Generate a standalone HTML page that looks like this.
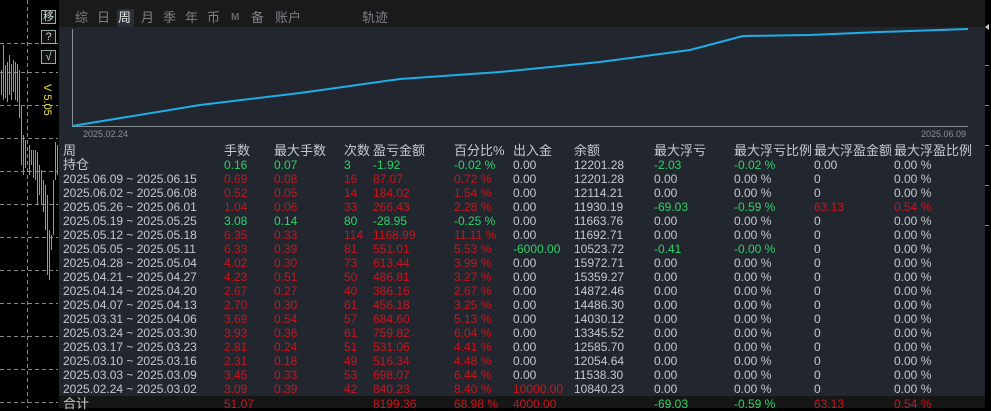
<!DOCTYPE html>
<html><head><meta charset="utf-8"><style>
*{margin:0;padding:0;box-sizing:border-box}
body{width:991px;height:408px;overflow:hidden;background:#000;font-family:"Liberation Sans","Noto Sans CJK SC",sans-serif;position:relative}
.panel{position:absolute;left:59px;top:0;width:926px;height:408px;background:#22262e}
.top{position:absolute;left:59px;top:0;width:926px;height:27px;background:#1a1a1a}
.tab{position:absolute;top:9px;font-size:13px;color:#7c8088;line-height:17px}
.row{position:absolute;left:0;width:991px;height:14px;font-size:12px;line-height:14px;color:#c5c9cf}
.row span{position:absolute;white-space:nowrap}
.r{color:#c8161c}.g{color:#2fd368}
.c0{left:63px}.c1{left:224px}.c2{left:274px}.c3{left:344px}.c4{left:373px}.c5{left:454px}.c6{left:513px}.c7{left:574px}.c8{left:654px}.c9{left:734px}.c10{left:814px}.c11{left:894px}
.hd{font-size:13px}
.btn{position:absolute;left:41px;width:15px;height:14px;border:1px solid #9aa;color:#cdd;font-size:11px;line-height:12px;text-align:center;background:#111}
</style></head><body>
<svg width="60" height="408" style="position:absolute;left:0;top:0">
<g stroke="#888" stroke-dasharray="4,3" stroke-width="1">
<line x1="27.5" y1="0" x2="27.5" y2="408"/>
<line x1="0" y1="43.5" x2="58" y2="43.5"/><line x1="0" y1="72.5" x2="58" y2="72.5"/><line x1="0" y1="105.5" x2="58" y2="105.5"/>
<line x1="0" y1="138.5" x2="58" y2="138.5"/><line x1="0" y1="171.5" x2="58" y2="171.5"/><line x1="0" y1="204.5" x2="58" y2="204.5"/>
<line x1="0" y1="237.5" x2="58" y2="237.5"/><line x1="0" y1="270.5" x2="58" y2="270.5"/><line x1="0" y1="303.5" x2="58" y2="303.5"/>
<line x1="0" y1="336.5" x2="58" y2="336.5"/><line x1="0" y1="369.5" x2="58" y2="369.5"/><line x1="0" y1="402.5" x2="58" y2="402.5"/>
</g>
<g fill="#3fd83a">
<rect x="1" y="70" width="1" height="25"/><rect x="3" y="45" width="1" height="55"/><rect x="5" y="65" width="1" height="33"/><rect x="7" y="62" width="1" height="40"/><rect x="9" y="55" width="1" height="40"/><rect x="11" y="64" width="1" height="36"/><rect x="13" y="60" width="1" height="32"/><rect x="15" y="62" width="1" height="38"/><rect x="17" y="64" width="1" height="38"/><rect x="19" y="70" width="1" height="48"/><rect x="21" y="105" width="1" height="60"/><rect x="23" y="135" width="1" height="40"/><rect x="25" y="140" width="1" height="28"/><rect x="29" y="145" width="1" height="30"/><rect x="31" y="150" width="1" height="15"/><rect x="33" y="150" width="1" height="28"/><rect x="35" y="150" width="1" height="30"/><rect x="37" y="152" width="1" height="53"/><rect x="39" y="165" width="1" height="30"/><rect x="41" y="170" width="1" height="35"/><rect x="43" y="180" width="1" height="32"/><rect x="45" y="185" width="1" height="45"/><rect x="47" y="195" width="1" height="80"/><rect x="49" y="230" width="1" height="50"/><rect x="51" y="235" width="1" height="15"/><rect x="53" y="180" width="1" height="55"/><rect x="55" y="142" width="1" height="38"/><rect x="57" y="145" width="1" height="30"/>
</g>
<text x="44" y="84" transform="rotate(90 44 84)" fill="#e8e040" font-size="11" font-family="Liberation Sans">V 5.05</text>
</svg>
<div class="btn" style="top:10px">移</div>
<div class="btn" style="top:30px">?</div>
<div class="btn" style="top:50px">√</div>
<svg width="6" height="408" style="position:absolute;left:985px;top:0"><g stroke="#888"><line x1="0" y1="65.5" x2="4" y2="65.5"/><line x1="0" y1="105.5" x2="4" y2="105.5"/><line x1="0" y1="145.5" x2="4" y2="145.5"/><line x1="0" y1="185.5" x2="4" y2="185.5"/><line x1="0" y1="225.5" x2="4" y2="225.5"/></g><polygon points="0,27 4,24 4,30" fill="#ccc"/></svg>
<div class="panel"></div>
<div class="top"></div>
<div style="position:absolute;left:117px;top:9px;width:17px;height:18px;background:#2a2f37"></div>
<div class="tab" style="left:75px">综</div><div class="tab" style="left:97px">日</div><div class="tab" style="left:118px;color:#e6e6e6">周</div><div class="tab" style="left:141px">月</div><div class="tab" style="left:163px">季</div><div class="tab" style="left:185px">年</div><div class="tab" style="left:207px">币</div><div class="tab" style="left:231px;font-size:10px;font-weight:bold;color:#666">M</div><div class="tab" style="left:251px">备</div><div class="tab" style="left:275px">账户</div><div class="tab" style="left:362px">轨迹</div>
<svg width="991" height="140" style="position:absolute;left:0;top:0">
<line x1="72.5" y1="29" x2="72.5" y2="127" stroke="#8a8d92"/>
<line x1="72" y1="126.5" x2="968" y2="126.5" stroke="#8a8d92"/>
<polyline fill="none" stroke="#1eaee8" stroke-width="2" points="72,126 200,105 300,93 400,79 500,72 600,62 690,50 743,36 810,35 880,32 968,29"/>
<text x="83" y="137" fill="#8d9197" font-size="9" font-family="Liberation Sans">2025.02.24</text>
<text x="921" y="137" fill="#8d9197" font-size="9" font-family="Liberation Sans">2025.06.09</text>
</svg>
<div class="row hd" style="top:144px"><span class="c0">周</span><span class="c1">手数</span><span class="c2">最大手数</span><span class="c3">次数</span><span class="c4">盈亏金额</span><span class="c5">百分比%</span><span class="c6">出入金</span><span class="c7">余额</span><span class="c8">最大浮亏</span><span class="c9">最大浮亏比例</span><span class="c10">最大浮盈金额</span><span class="c11">最大浮盈比例</span></div>
<div class="row" style="top:158px"><span class="c0 hd">持仓</span><span class="c1 g">0.16</span><span class="c2 g">0.07</span><span class="c3 g">3</span><span class="c4 g">-1.92</span><span class="c5 g">-0.02 %</span><span class="c6">0.00</span><span class="c7">12201.28</span><span class="c8 g">-2.03</span><span class="c9 g">-0.02 %</span><span class="c10">0.00</span><span class="c11">0.00 %</span></div>
<div class="row" style="top:172px"><span class="c0">2025.06.09 ~ 2025.06.15</span><span class="c1 r">0.69</span><span class="c2 r">0.08</span><span class="c3 r">16</span><span class="c4 r">87.07</span><span class="c5 r">0.72 %</span><span class="c6">0.00</span><span class="c7">12201.28</span><span class="c8">0.00</span><span class="c9">0.00 %</span><span class="c10">0</span><span class="c11">0.00 %</span></div>
<div class="row" style="top:186px"><span class="c0">2025.06.02 ~ 2025.06.08</span><span class="c1 r">0.52</span><span class="c2 r">0.05</span><span class="c3 r">14</span><span class="c4 r">184.02</span><span class="c5 r">1.54 %</span><span class="c6">0.00</span><span class="c7">12114.21</span><span class="c8">0.00</span><span class="c9">0.00 %</span><span class="c10">0</span><span class="c11">0.00 %</span></div>
<div class="row" style="top:200px"><span class="c0">2025.05.26 ~ 2025.06.01</span><span class="c1 r">1.04</span><span class="c2 r">0.06</span><span class="c3 r">33</span><span class="c4 r">266.43</span><span class="c5 r">2.28 %</span><span class="c6">0.00</span><span class="c7">11930.19</span><span class="c8 g">-69.03</span><span class="c9 g">-0.59 %</span><span class="c10 r">63.13</span><span class="c11 r">0.54 %</span></div>
<div class="row" style="top:214px"><span class="c0">2025.05.19 ~ 2025.05.25</span><span class="c1 g">3.08</span><span class="c2 g">0.14</span><span class="c3 g">80</span><span class="c4 g">-28.95</span><span class="c5 g">-0.25 %</span><span class="c6">0.00</span><span class="c7">11663.76</span><span class="c8">0.00</span><span class="c9">0.00 %</span><span class="c10">0</span><span class="c11">0.00 %</span></div>
<div class="row" style="top:228px"><span class="c0">2025.05.12 ~ 2025.05.18</span><span class="c1 r">6.35</span><span class="c2 r">0.33</span><span class="c3 r">114</span><span class="c4 r">1168.99</span><span class="c5 r">11.11 %</span><span class="c6">0.00</span><span class="c7">11692.71</span><span class="c8">0.00</span><span class="c9">0.00 %</span><span class="c10">0</span><span class="c11">0.00 %</span></div>
<div class="row" style="top:242px"><span class="c0">2025.05.05 ~ 2025.05.11</span><span class="c1 r">6.33</span><span class="c2 r">0.39</span><span class="c3 r">81</span><span class="c4 r">551.01</span><span class="c5 r">5.53 %</span><span class="c6 g">-6000.00</span><span class="c7">10523.72</span><span class="c8 g">-0.41</span><span class="c9 g">-0.00 %</span><span class="c10">0</span><span class="c11">0.00 %</span></div>
<div class="row" style="top:256px"><span class="c0">2025.04.28 ~ 2025.05.04</span><span class="c1 r">4.02</span><span class="c2 r">0.30</span><span class="c3 r">73</span><span class="c4 r">613.44</span><span class="c5 r">3.99 %</span><span class="c6">0.00</span><span class="c7">15972.71</span><span class="c8">0.00</span><span class="c9">0.00 %</span><span class="c10">0</span><span class="c11">0.00 %</span></div>
<div class="row" style="top:270px"><span class="c0">2025.04.21 ~ 2025.04.27</span><span class="c1 r">4.23</span><span class="c2 r">0.51</span><span class="c3 r">50</span><span class="c4 r">486.81</span><span class="c5 r">3.27 %</span><span class="c6">0.00</span><span class="c7">15359.27</span><span class="c8">0.00</span><span class="c9">0.00 %</span><span class="c10">0</span><span class="c11">0.00 %</span></div>
<div class="row" style="top:284px"><span class="c0">2025.04.14 ~ 2025.04.20</span><span class="c1 r">2.67</span><span class="c2 r">0.27</span><span class="c3 r">40</span><span class="c4 r">386.16</span><span class="c5 r">2.67 %</span><span class="c6">0.00</span><span class="c7">14872.46</span><span class="c8">0.00</span><span class="c9">0.00 %</span><span class="c10">0</span><span class="c11">0.00 %</span></div>
<div class="row" style="top:298px"><span class="c0">2025.04.07 ~ 2025.04.13</span><span class="c1 r">2.70</span><span class="c2 r">0.30</span><span class="c3 r">61</span><span class="c4 r">456.18</span><span class="c5 r">3.25 %</span><span class="c6">0.00</span><span class="c7">14486.30</span><span class="c8">0.00</span><span class="c9">0.00 %</span><span class="c10">0</span><span class="c11">0.00 %</span></div>
<div class="row" style="top:312px"><span class="c0">2025.03.31 ~ 2025.04.06</span><span class="c1 r">3.69</span><span class="c2 r">0.54</span><span class="c3 r">57</span><span class="c4 r">684.60</span><span class="c5 r">5.13 %</span><span class="c6">0.00</span><span class="c7">14030.12</span><span class="c8">0.00</span><span class="c9">0.00 %</span><span class="c10">0</span><span class="c11">0.00 %</span></div>
<div class="row" style="top:326px"><span class="c0">2025.03.24 ~ 2025.03.30</span><span class="c1 r">3.93</span><span class="c2 r">0.36</span><span class="c3 r">61</span><span class="c4 r">759.82</span><span class="c5 r">6.04 %</span><span class="c6">0.00</span><span class="c7">13345.52</span><span class="c8">0.00</span><span class="c9">0.00 %</span><span class="c10">0</span><span class="c11">0.00 %</span></div>
<div class="row" style="top:340px"><span class="c0">2025.03.17 ~ 2025.03.23</span><span class="c1 r">2.81</span><span class="c2 r">0.24</span><span class="c3 r">51</span><span class="c4 r">531.06</span><span class="c5 r">4.41 %</span><span class="c6">0.00</span><span class="c7">12585.70</span><span class="c8">0.00</span><span class="c9">0.00 %</span><span class="c10">0</span><span class="c11">0.00 %</span></div>
<div class="row" style="top:354px"><span class="c0">2025.03.10 ~ 2025.03.16</span><span class="c1 r">2.31</span><span class="c2 r">0.18</span><span class="c3 r">49</span><span class="c4 r">516.34</span><span class="c5 r">4.48 %</span><span class="c6">0.00</span><span class="c7">12054.64</span><span class="c8">0.00</span><span class="c9">0.00 %</span><span class="c10">0</span><span class="c11">0.00 %</span></div>
<div class="row" style="top:368px"><span class="c0">2025.03.03 ~ 2025.03.09</span><span class="c1 r">3.45</span><span class="c2 r">0.33</span><span class="c3 r">53</span><span class="c4 r">698.07</span><span class="c5 r">6.44 %</span><span class="c6">0.00</span><span class="c7">11538.30</span><span class="c8">0.00</span><span class="c9">0.00 %</span><span class="c10">0</span><span class="c11">0.00 %</span></div>
<div class="row" style="top:382px"><span class="c0">2025.02.24 ~ 2025.03.02</span><span class="c1 r">3.09</span><span class="c2 r">0.39</span><span class="c3 r">42</span><span class="c4 r">840.23</span><span class="c5 r">8.40 %</span><span class="c6 r">10000.00</span><span class="c7">10840.23</span><span class="c8">0.00</span><span class="c9">0.00 %</span><span class="c10">0</span><span class="c11">0.00 %</span></div>
<div style="position:absolute;left:59px;top:396px;width:926px;height:12px;background:#161616"></div>
<div class="row" style="top:397px"><span class="c0 hd">合计</span><span class="c1 r">51.07</span><span class="c4 r">8199.36</span><span class="c5 r">68.98 %</span><span class="c6 r">4000.00</span><span class="c8 g">-69.03</span><span class="c9 g">-0.59 %</span><span class="c10 r">63.13</span><span class="c11 r">0.54 %</span></div>
</body></html>
